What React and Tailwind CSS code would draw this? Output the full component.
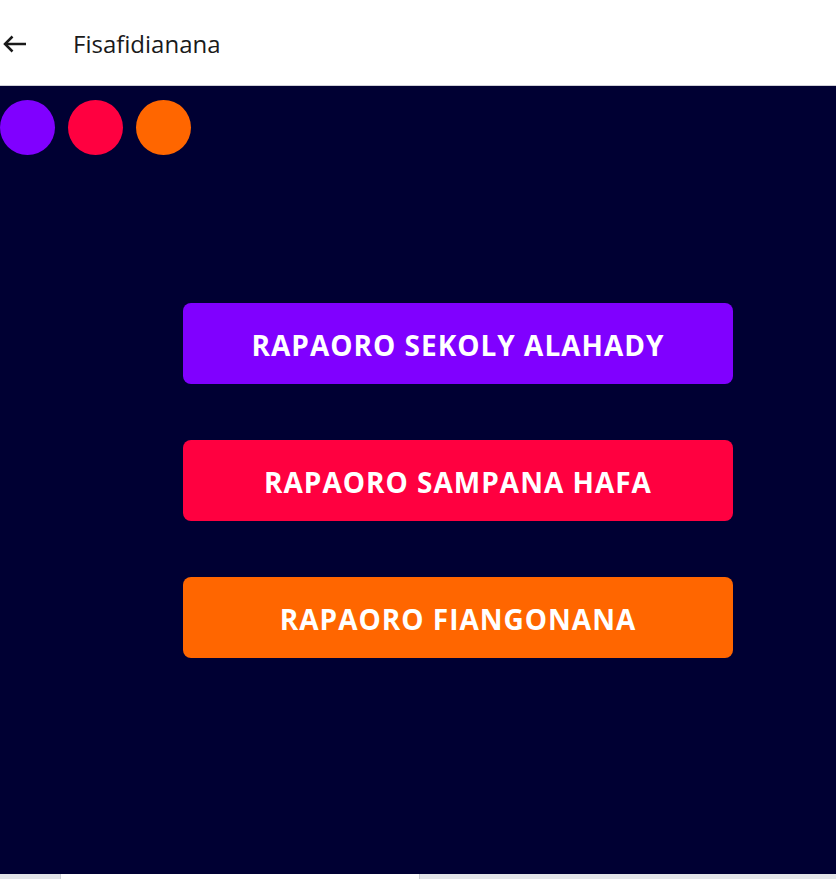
export default function App() {
  const buttons = [
    { label: "RAPAORO SEKOLY ALAHADY", color: "bg-[#8000ff]" },
    { label: "RAPAORO SAMPANA HAFA", color: "bg-[#ff0040]" },
    { label: "RAPAORO FIANGONANA", color: "bg-[#ff6600]" },
  ];

  return (
    <div className="h-[879px] w-[836px] flex flex-col overflow-hidden font-['Open_Sans',sans-serif]">
      {/* Top bar */}
      <header className="h-[86px] bg-white border-b border-[#d0d0d8] flex items-center flex-shrink-0">
        <button className="w-[24px] h-[18px] ml-[3px] mt-[2px] flex items-center justify-center text-[#1a1a1a]">
          <svg width="24" height="18" viewBox="0 0 24 18" fill="none" stroke="currentColor" strokeWidth="2.5" strokeLinecap="butt" strokeLinejoin="miter">
            <path d="M23 9H2.5" />
            <path d="M9.5 1.5 2 9l7.5 7.5" />
          </svg>
        </button>
        <h1 className="ml-[46px] mt-[2px] text-[24px] text-[#1a1a1a]">Fisafidianana</h1>
      </header>

      {/* Main content */}
      <main className="flex-1 bg-[#000033] flex flex-col">
        <div className="flex gap-[13px] pt-[14px]">
          <span className="w-[55px] h-[55px] rounded-full bg-[#8000ff]" />
          <span className="w-[55px] h-[55px] rounded-full bg-[#ff0040]" />
          <span className="w-[55px] h-[55px] rounded-full bg-[#ff6600]" />
        </div>

        <div className="flex flex-col gap-[56px] ml-[183px] mt-[148px] w-[550px]">
          {buttons.map((b) => (
            <button
              key={b.label}
              className={`${b.color} h-[81px] rounded-lg text-white font-bold text-[28px] tracking-[1px] pt-[3px]`}
            >
              {b.label}
            </button>
          ))}
        </div>
      </main>

      {/* Bottom strip */}
      <div className="h-[5px] bg-[#e3e5e8] flex flex-shrink-0">
        <div className="ml-[60px] w-[360px] bg-white border-x border-[#cfd2d6]" />
      </div>
    </div>
  );
}
